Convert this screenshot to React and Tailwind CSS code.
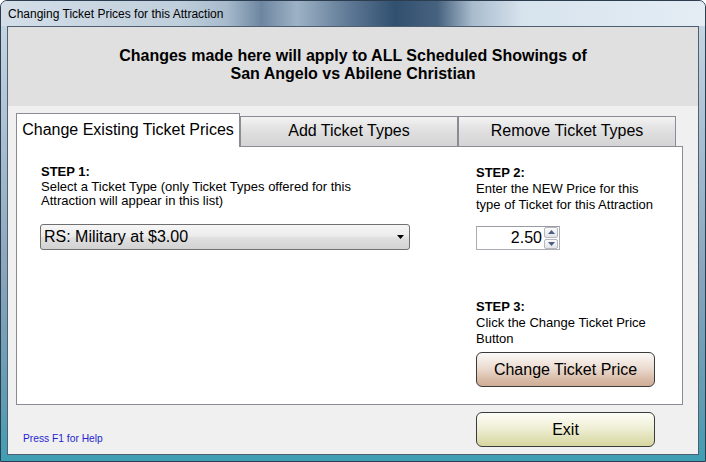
export default function App() {
  return (
    <div className="w-[706px] h-[462px] overflow-hidden rounded-t-[7px] border border-[#2c3d4f] flex flex-col font-['Liberation_Sans',Arial,sans-serif] text-black bg-[linear-gradient(180deg,#cbd9e5_0%,#a9bfd1_30%,#88a4bb_60%,#5f9cb2_88%,#3f9fb3_100%)]">
      <div className="h-[25px] shrink-0 pl-[7px] pt-[6px] text-[12px] leading-[14px] bg-[linear-gradient(90deg,#d3dee8_0%,#c0cfdc_25%,#a7bbcd_32%,#6d86a0_37%,#9db2c5_42%,#5a7592_50%,#31506f_56%,#47627f_62%,#a9bccd_67%,#d7e3ed_74%,#e4edf4_100%)]">
        Changing Ticket Prices for this Attraction
      </div>
      <div className="flex-1 mx-[6px] mb-[6px] border border-[#4d5f71] bg-[#f0f0f0] flex flex-col">
        {/* header */}
        <div className="h-[79px] shrink-0 bg-[#e0e0e0] pt-[20px] text-center font-bold text-[16px] leading-[18px]">
          Changes made here will apply to ALL Scheduled Showings of
          <br />
          San Angelo vs Abilene Christian
        </div>

        {/* tabs */}
        <div className="mt-[7px] pl-[8px] pr-[15px] flex flex-col">
          <div className="flex items-start h-[34px] relative z-10">
            <div className="w-[224px] h-[34px] bg-white border border-b-0 border-[#898c95] pt-[7px] text-center text-[16px] leading-[18px]">
              Change Existing Ticket Prices
            </div>
            <div className="w-[218px] h-[30px] mt-[3px] border border-b-0 border-[#898c95] pt-[5px] text-center text-[16px] leading-[18px] bg-[linear-gradient(180deg,#f4f4f4_0%,#e6e6e6_30%,#dedede_55%,#d4d4d4_100%)]">
              Add Ticket Types
            </div>
            <div className="w-[218px] h-[30px] mt-[3px] border border-b-0 border-[#898c95] pt-[5px] text-center text-[16px] leading-[18px] bg-[linear-gradient(180deg,#f4f4f4_0%,#e6e6e6_30%,#dedede_55%,#d4d4d4_100%)]">
              Remove Ticket Types
            </div>
          </div>
          <div className="-mt-[1px] h-[259px] bg-white border border-[#898c95] flex pl-[24px] pt-[17px]">
            {/* left column */}
            <div className="w-[435px] shrink-0 flex flex-col text-[13px]">
              <div className="font-bold leading-[16px]">STEP 1:</div>
              <div className="leading-[14px]">
                Select a Ticket Type (only Ticket Types offered for this
                <br />
                Attraction will appear in this list)
              </div>
              <div className="mt-[16px] -ml-[1px] w-[370px] h-[26px] rounded-[3px] border border-[#707070] flex items-center justify-between pl-[3px] pr-[5px] text-[16px] bg-[linear-gradient(180deg,#f6f6f6_0%,#ececec_45%,#dfdfdf_55%,#d2d2d2_100%)]">
                <span className="leading-[18px]">RS: Military at $3.00</span>
                <svg width="7" height="4" viewBox="0 0 7 4">
                  <path d="M0 0H7L3.5 4Z" fill="#000" />
                </svg>
              </div>
            </div>
            {/* right column */}
            <div className="flex flex-col text-[13px] leading-[16px] pt-[1px]">
              <div className="font-bold">STEP 2:</div>
              <div>
                Enter the NEW Price for this
                <br />
                type of Ticket for this Attraction
              </div>
              <div className="mt-[13px] w-[84px] h-[24px] border border-[#abadb3] border-t-[#9a9ca3] bg-white flex items-stretch">
                <div className="flex-1 text-right text-[16px] leading-[22px] pr-[2px]">2.50</div>
                <div className="w-[15px] flex flex-col gap-[1px] pr-[1px]">
                  <div className="flex-1 border border-[#b4b7bd] rounded-[2px] bg-[linear-gradient(180deg,#fafafa,#e2e4e8)] flex items-center justify-center">
                    <svg width="7" height="4" viewBox="0 0 7 4">
                      <path d="M0 4H7L3.5 0Z" fill="#4c5f80" />
                    </svg>
                  </div>
                  <div className="flex-1 border border-[#b4b7bd] rounded-[2px] bg-[linear-gradient(180deg,#fafafa,#e2e4e8)] flex items-center justify-center">
                    <svg width="7" height="4" viewBox="0 0 7 4">
                      <path d="M0 0H7L3.5 4Z" fill="#4c5f80" />
                    </svg>
                  </div>
                </div>
              </div>
              <div className="mt-[49px] font-bold">STEP 3:</div>
              <div>
                Click the Change Ticket Price
                <br />
                Button
              </div>
              <div className="mt-[5px] w-[179px] h-[35px] rounded-[6px] border border-[#3b3b3b] flex items-center justify-center text-[16px] bg-[linear-gradient(180deg,#fbf9f7_0%,#ecdcd1_45%,#d8bba7_80%,#cfad96_100%)]">
                Change Ticket Price
              </div>
            </div>
          </div>
        </div>

        {/* bottom row */}
        <div className="flex items-start pt-[7px]">
          <div className="w-[468px] shrink-0 pl-[15px] pt-[20px] text-[10.25px] leading-[13px] text-[#1f1fcf]">
            Press F1 for Help
          </div>
          <div className="w-[179px] h-[35px] rounded-[6px] border border-[#3b3b3b] flex items-center justify-center text-[16px] bg-[linear-gradient(180deg,#fdfdf8_0%,#efefd6_45%,#dfdfb3_80%,#d6d69f_100%)]">
            Exit
          </div>
        </div>
      </div>
    </div>
  );
}
